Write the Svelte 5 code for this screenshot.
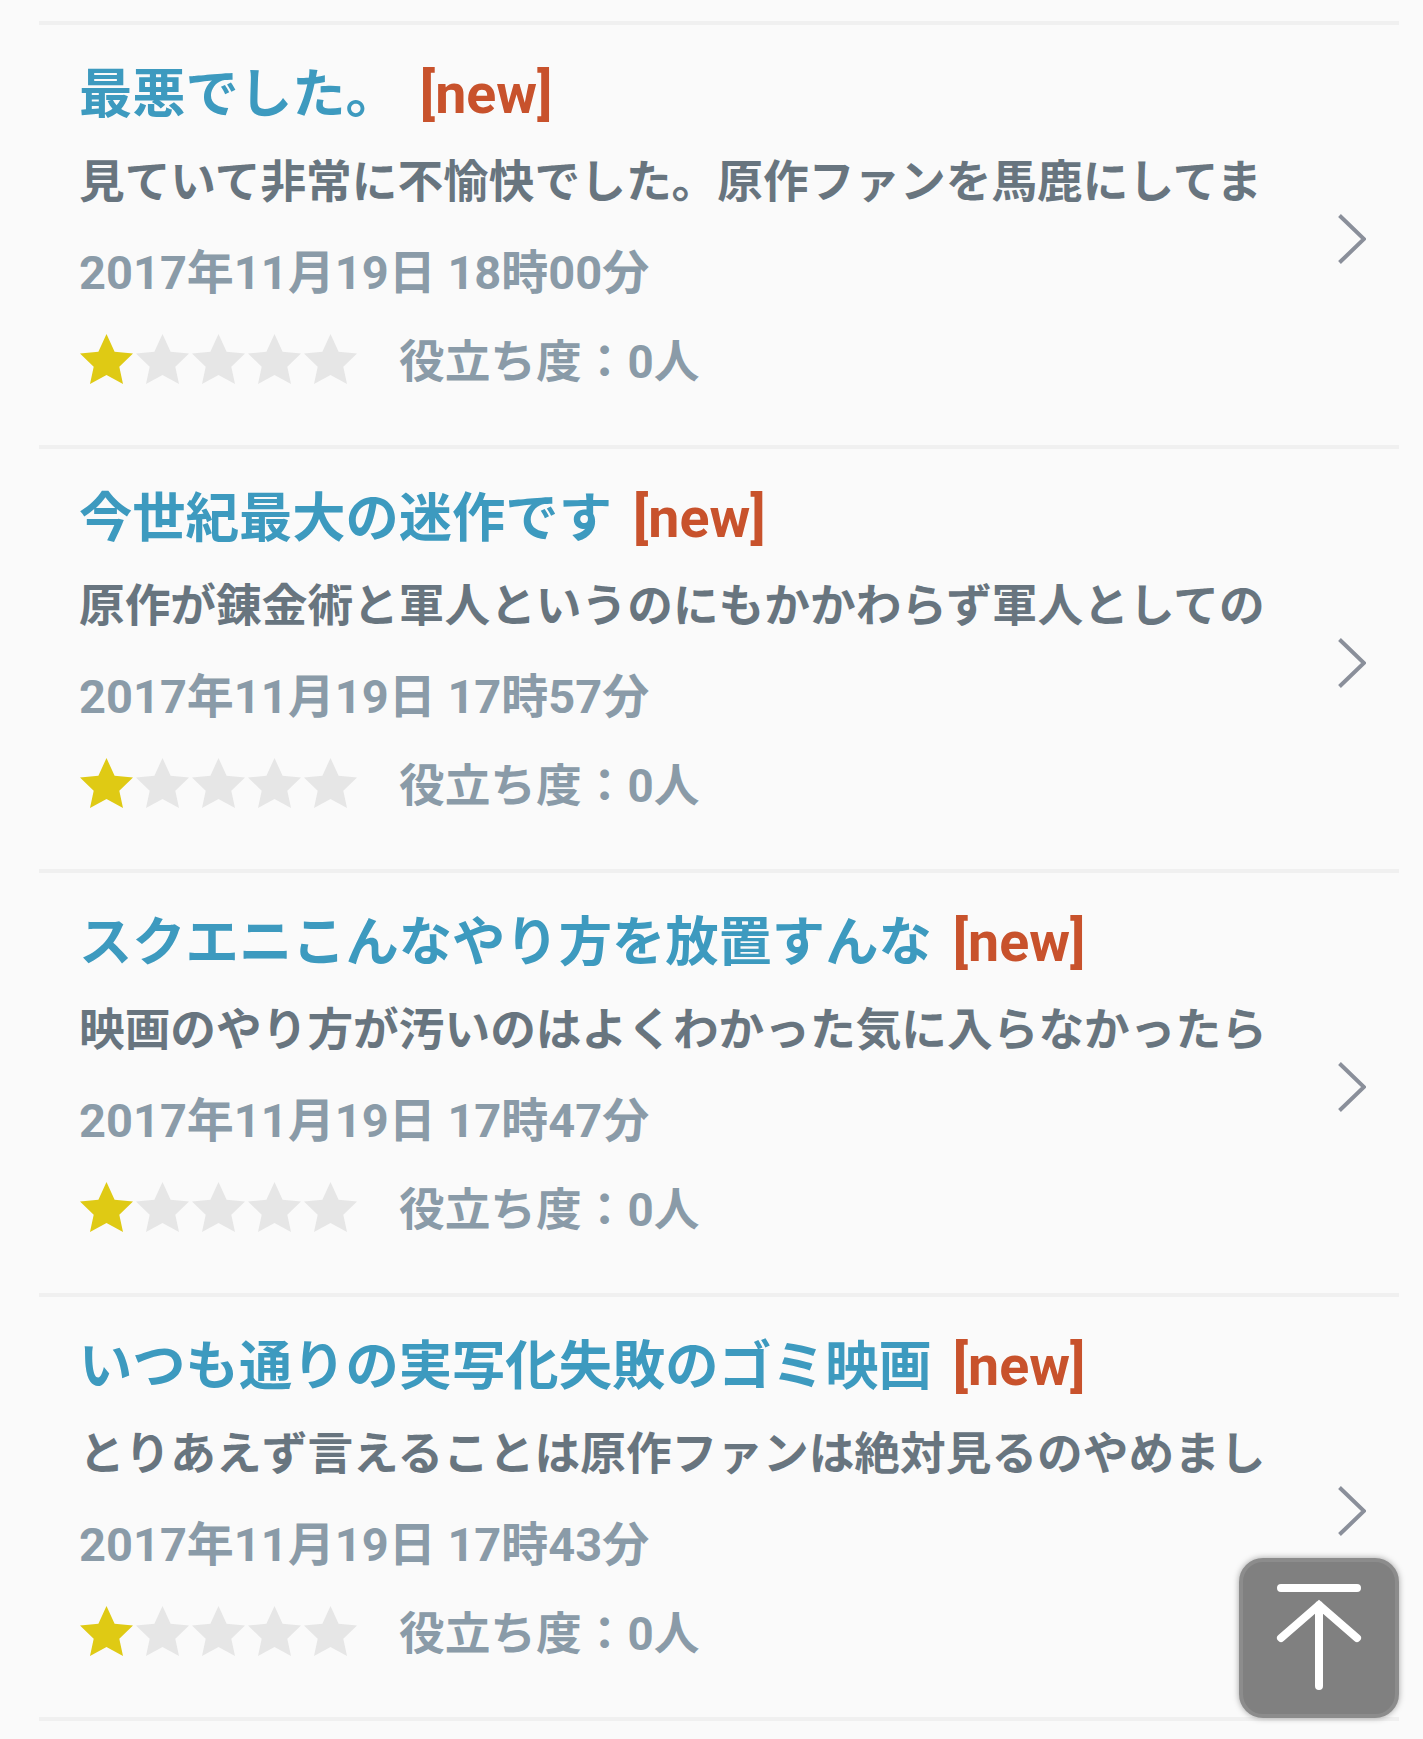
<script>
  const reviews = [
    {
      title: '最悪でした。',
      body: '見ていて非常に不愉快でした。原作ファンを馬鹿にしてま',
      date: '2017年11月19日 18時00分'
    },
    {
      title: '今世紀最大の迷作です',
      body: '原作が錬金術と軍人というのにもかかわらず軍人としての',
      date: '2017年11月19日 17時57分'
    },
    {
      title: 'スクエニこんなやり方を放置すんな',
      body: '映画のやり方が汚いのはよくわかった気に入らなかったら',
      date: '2017年11月19日 17時47分'
    },
    {
      title: 'いつも通りの実写化失敗のゴミ映画',
      body: 'とりあえず言えることは原作ファンは絶対見るのやめまし',
      date: '2017年11月19日 17時43分'
    }
  ];

  const stars = [1, 2, 3, 4, 5];
  const rating = 1;
</script>

<div class="list">
  {#each reviews as review}
    <div class="review">
      <div class="content">
        <div class="title">
          <span>{review.title}</span><span class="new">[new]</span>
        </div>
        <div class="body">{review.body}</div>
        <div class="date">{review.date}</div>
        <div class="meta">
          <div class="stars">
            {#each stars as n}
              <svg class="star" viewBox="0 0 53 50" class:on={n <= rating}>
                <polygon points="26.5,0 34.6,17.8 53,19.4 39.3,32.8 43,50 26.5,41 10,50 13.7,32.8 0,19.4 18.4,17.8" />
              </svg>
            {/each}
          </div>
          <span class="useful">役立ち度：0人</span>
        </div>
      </div>
      <svg class="chevron" viewBox="0 0 28 50">
        <path d="M1.5 1.5 L26 25 L1.5 48.5" />
      </svg>
    </div>
  {/each}
</div>

<button class="to-top" aria-label="ページトップへ">
  <svg viewBox="0 0 152 152">
    <path d="M38 26 H114 M38 76 L76 43 L114 76 M76 43 V124" />
  </svg>
</button>

<style>
  :global(body) {
    background: #fafafa;
    font-family: Roboto, "Noto Sans CJK JP", sans-serif;
  }

  .list {
    height: 1739px;
    box-sizing: border-box;
    padding: 21px 24px 0 39px;
    overflow: hidden;
  }

  .review {
    height: 424px;
    box-sizing: border-box;
    display: flex;
    align-items: center;
    border-top: 4px solid #f0f0f0;
    padding: 8px 33px 0 40px;
  }

  .review:last-child {
    height: 428px;
    border-bottom: 4px solid #f0f0f0;
  }

  .content {
    flex: 1;
    min-width: 0;
    align-self: flex-start;
    padding-top: 24px;
    font-weight: 700;
  }

  .title {
    height: 76px;
    font-size: 53.3px;
    line-height: 76px;
    color: #3d9abf;
    white-space: nowrap;
  }

  .new {
    margin-left: 21px;
    font-size: 55.5px;
    color: #c8522c;
  }

  .body {
    height: 60px;
    margin-top: 20px;
    font-size: 45.7px;
    line-height: 60px;
    color: #68757f;
    white-space: nowrap;
  }

  .date {
    margin-top: 30px;
    font-size: 47px;
    line-height: 60px;
    color: #8a9ba8;
  }

  .meta {
    display: flex;
    align-items: center;
    margin-top: 30px;
  }

  .stars {
    display: flex;
    gap: 3px;
    margin: -8px 0 0 1px;
  }

  .star {
    width: 53px;
    height: 50px;
    fill: #e6e6e6;
  }

  .star.on {
    fill: #dfca14;
  }

  .useful {
    margin-left: 42px;
    font-size: 45.7px;
    line-height: 60px;
    color: #8a9ba8;
  }

  .chevron {
    flex: none;
    width: 28px;
    height: 50px;
    fill: none;
    stroke: #8a8f9a;
    stroke-width: 4;
  }

  .to-top {
    position: fixed;
    left: 1239px;
    top: 1558px;
    width: 160px;
    height: 160px;
    padding: 0;
    border: 4px solid #8c8c8c;
    border-radius: 24px;
    background: #808080;
    box-shadow: 0 0 6px rgba(0, 0, 0, 0.35);
    box-sizing: border-box;
  }

  .to-top svg {
    display: block;
    width: 152px;
    height: 152px;
    fill: none;
    stroke: #fff;
    stroke-width: 8;
    stroke-linecap: round;
  }
</style>
